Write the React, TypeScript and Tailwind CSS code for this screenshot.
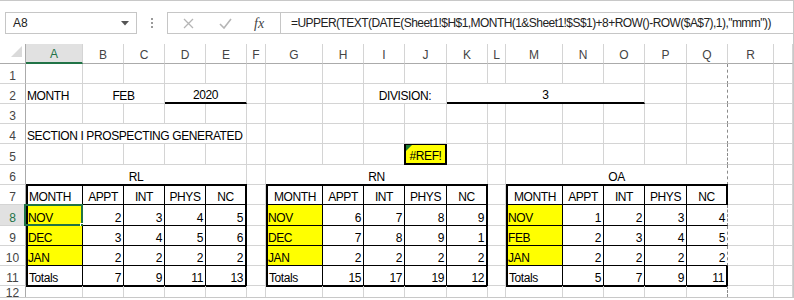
const LETTERS = ['A', 'B', 'C', 'D', 'E', 'F', 'G', 'H', 'I', 'J', 'K', 'L', 'M', 'N', 'O', 'P', 'Q', 'R', 'S']

const GRID = 'bg-white'
const LINE = 'border-b border-r border-[#d4d4d4]'
const BREAK = 'border-b border-r border-[#d4d4d4] border-r-[#8a8a8a] [border-right-style:dashed]'

type Val = string | number

const RL: Val[][] = [
  ['MONTH', 'APPT', 'INT', 'PHYS', 'NC'],
  ['NOV', 2, 3, 4, 5],
  ['DEC', 3, 4, 5, 6],
  ['JAN', 2, 2, 2, 2],
  ['Totals', 7, 9, 11, 13],
]
const RN: Val[][] = [
  ['MONTH', 'APPT', 'INT', 'PHYS', 'NC'],
  ['NOV', 6, 7, 8, 9],
  ['DEC', 7, 8, 9, 1],
  ['JAN', 2, 2, 2, 2],
  ['Totals', 15, 17, 19, 12],
]
const OA: Val[][] = [
  ['MONTH', 'APPT', 'INT', 'PHYS', 'NC'],
  ['NOV', 1, 2, 3, 4],
  ['FEB', 2, 3, 4, 5],
  ['JAN', 2, 2, 2, 2],
  ['Totals', 5, 7, 9, 11],
]

// plain empty cell; column Q carries the dashed page break on its right
const Blank = ({col}: {col: string}) => <div className={col === 'Q' ? BREAK : LINE} />

const RowHead = ({n, active = false}: {n: number; active?: boolean}) => (
  <div
    className={`flex items-end justify-center border-b border-r border-[#d4d4d4] border-r-[#ababab] text-[12px] leading-[14px] ${
      active ? 'bg-[#e1e1e1] text-[#217346]' : 'bg-white text-[#444]'
    }`}
  >
    {n}
  </div>
)

const Text = ({
  children,
  className = '',
}: {
  children?: React.ReactNode
  className?: string
}) => (
  <div className={`flex items-end whitespace-nowrap text-[12px] leading-[14px] tracking-[-0.4px] text-black ${className}`}>
    {children}
  </div>
)

function DataTable({
  place,
  cols,
  rows,
  headLeft = false,
  breakRight = false,
}: {
  place: string
  cols: string
  rows: Val[][]
  headLeft?: boolean
  breakRight?: boolean
}) {
  return (
    <div
      className={`${place} -mt-px -mb-px grid ${cols} grid-rows-[19px_21px_20px_20px_1fr] border-2 border-black ${
        breakRight ? 'border-r-0' : ''
      }`}
    >
      {rows.flatMap((row, r) =>
        row.map((v, c) => {
          let b = ''
          if (r < 4) b += ' border-b border-b-black'
          if (c < 4) b += ' border-r border-r-black'
          else if (breakRight)
            b +=
              r === 0 || r === 4
                ? ' border-r-2 border-r-black'
                : ' border-r border-r-[#8a8a8a] [border-right-style:dashed]'
          const yellow = r > 0 && r < 4 && c === 0
          let a = 'justify-end pr-[2px]'
          if (r === 0) a = headLeft && c === 0 ? 'justify-start pl-px' : 'justify-center'
          else if (c === 0) a = r === 4 ? 'justify-start pl-px' : 'justify-start pl-0'
          const selected = headLeft && r === 1 && c === 0
          return (
            <div
              key={`${r}-${c}`}
              className={`relative flex items-end whitespace-nowrap text-[12px] leading-[14px] tracking-[-0.4px] ${a}${b} ${
                yellow ? 'bg-[#ffff00]' : 'bg-white'
              }`}
            >
              {v}
              {selected && (
                <>
                  <div className="absolute -top-px -right-px -bottom-px -left-[4px] border-2 border-[#217346]" />
                  <div className="absolute -right-[4px] -bottom-[4px] h-[6px] w-[6px] border border-white bg-[#217346]" />
                </>
              )}
            </div>
          )
        }),
      )}
    </div>
  )
}

function FormulaBar() {
  return (
    <div className="flex h-[43px] items-start pt-[11px] text-[12px]">
      <div className="ml-[5px] flex h-[22px] w-[132px] items-center justify-between border border-[#c6c6c6] pr-[7px] pl-[7px] text-[#222]">
        <span>A8</span>
        <svg width="8" height="5" viewBox="0 0 8 5">
          <path d="M0 0 L8 0 L4 4.5 Z" fill="#555" />
        </svg>
      </div>
      <div className="flex h-[22px] w-[30px] flex-col items-center justify-center gap-[2px]">
        <div className="h-[2px] w-[2px] bg-[#9a9a9a]" />
        <div className="h-[2px] w-[2px] bg-[#9a9a9a]" />
        <div className="h-[2px] w-[2px] bg-[#9a9a9a]" />
      </div>
      <div className="flex h-[22px] flex-1 border border-r-0 border-[#c6c6c6]">
        <div className="flex w-[113px] items-center border-r border-[#c6c6c6]">
          <svg className="ml-[15px]" width="11" height="11" viewBox="0 0 11 11">
            <path d="M1 1 L10 10 M10 1 L1 10" stroke="#b5b5b5" strokeWidth="1.3" />
          </svg>
          <svg className="ml-[25px]" width="13" height="11" viewBox="0 0 13 11">
            <path d="M1 6 L5 10 L12 1" stroke="#b5b5b5" strokeWidth="1.6" fill="none" />
          </svg>
          <span className="ml-[22px] font-['Liberation_Serif',serif] text-[14px] italic text-[#444]">fx</span>
        </div>
        <div className="flex items-center pl-[10px] whitespace-nowrap tracking-[-0.55px] text-[#222]">
          =UPPER(TEXT(DATE(Sheet1!$H$1,MONTH(1&amp;Sheet1!$S$1)+8+ROW()-ROW($A$7),1),"mmm"))
        </div>
      </div>
    </div>
  )
}

export default function App() {
  const blanks = (letters: string[]) => letters.map((l) => <Blank key={l} col={l} />)
  const all = LETTERS

  return (
    <div className="h-[300px] w-[794px] overflow-hidden bg-white">
      <div className="h-[298px] w-[794px] overflow-hidden border-t border-r border-b border-[#c8c8c8] font-['Liberation_Sans',Arial,sans-serif]">
        <FormulaBar />
        <div
          className={`${GRID} grid h-[253px] grid-cols-[26px_57px_41px_41px_41px_41px_19px_57px_41px_41px_42px_41px_18px_57px_41px_41px_42px_41px_46px_1fr] grid-rows-[20px_20px_20px_20px_20px_21px_20px_20px_21px_20px_20px_20px_1fr]`}
        >
          {/* column headers */}
          <div className="relative border-b border-r border-[#ababab]">
            <svg width="26" height="19" viewBox="0 0 26 19">
              <path d="M22 2 L22 13 L11 13 Z" fill="#dadada" />
            </svg>
          </div>
          {all.map((l) => (
            <div
              key={l}
              className={`flex items-end justify-center pb-px text-[12px] leading-[14px] ${
                l === 'A'
                  ? 'border-r border-b-2 border-[#d4d4d4] border-b-[#217346] bg-[#e1e1e1] text-[#217346]'
                  : 'border-r border-b border-[#d4d4d4] border-b-[#ababab] text-[#444]'
              }`}
            >
              {l === 'S' ? '' : l}
            </div>
          ))}

          {/* row 1 */}
          <RowHead n={1} />
          {blanks(all)}

          {/* row 2 */}
          <RowHead n={2} />
          <Text className={`${LINE} pl-px`}>MONTH</Text>
          <Text className={`${LINE} col-span-2 justify-center`}>FEB</Text>
          <Text className={`${LINE} col-span-2 justify-center border-b-2 border-b-black`}>2020</Text>
          {blanks(['F', 'G', 'H'])}
          <Text className={`${LINE} col-span-2 justify-center`}>DIVISION:</Text>
          <Text className={`${LINE} col-span-5 justify-center border-b-2 border-b-black`}>3</Text>
          {blanks(['P', 'Q', 'R', 'S'])}

          {/* row 3 */}
          <RowHead n={3} />
          {blanks(all)}

          {/* row 4 */}
          <RowHead n={4} />
          <Text className={`${LINE} col-span-5 pl-px`}>SECTION I PROSPECTING GENERATED</Text>
          {blanks(['F', 'G', 'H', 'I', 'J', 'K', 'L', 'M', 'N', 'O', 'P', 'Q', 'R', 'S'])}

          {/* row 5 */}
          <RowHead n={5} />
          {blanks(['A', 'B', 'C', 'D', 'E', 'F', 'G', 'H', 'I'])}
          <div className="relative -ml-px flex items-end justify-center border-x-2 border-t border-b-2 border-black bg-[#ffff00] text-[12px] leading-[14px] tracking-[-0.4px]">
            #REF!
            <div className="absolute top-0 left-0 h-0 w-0 border-t-[6px] border-r-[6px] border-t-[#1e7b34] border-r-transparent" />
          </div>
          {blanks(['K', 'L', 'M', 'N', 'O', 'P', 'Q', 'R', 'S'])}

          {/* row 6 */}
          <RowHead n={6} />
          <Text className={`${LINE} col-span-5 justify-center`}>RL</Text>
          <Blank col="F" />
          <Text className={`${LINE} col-span-5 justify-center`}>RN</Text>
          <Blank col="L" />
          <Text className={`${BREAK} col-span-5 justify-center`}>OA</Text>
          {blanks(['R', 'S'])}

          {/* rows 7-11: three bordered tables */}
          <DataTable
            place="col-start-2 col-span-5 row-start-8 row-span-5"
            cols="grid-cols-[55px_41px_41px_41px_1fr]"
            rows={RL}
            headLeft
          />
          <DataTable
            place="col-start-8 col-span-5 row-start-8 row-span-5"
            cols="grid-cols-[55px_41px_41px_42px_1fr]"
            rows={RN}
          />
          <DataTable
            place="col-start-14 col-span-5 row-start-8 row-span-5"
            cols="grid-cols-[55px_41px_41px_42px_1fr]"
            rows={OA}
            breakRight
          />
          {[7, 8, 9, 10, 11].flatMap((n) => [
            <RowHead key={`h${n}`} n={n} active={n === 8} />,
            <Blank key={`f${n}`} col="F" />,
            <Blank key={`l${n}`} col="L" />,
            <Blank key={`r${n}`} col="R" />,
            <Blank key={`s${n}`} col="S" />,
          ])}

          {/* row 12, cut off */}
          <RowHead n={12} />
          {blanks(all)}
        </div>
      </div>
    </div>
  )
}
